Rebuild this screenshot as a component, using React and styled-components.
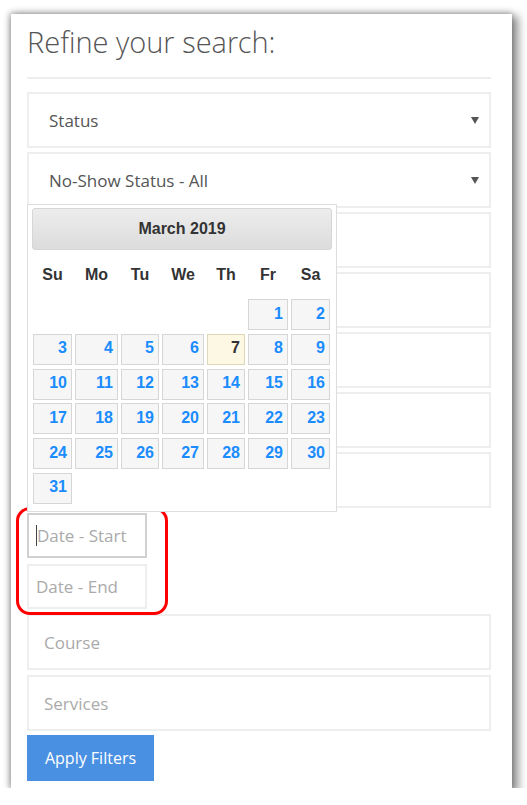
import React from "react"
import styled, { createGlobalStyle } from "styled-components"

const GlobalStyle = createGlobalStyle`
  body {
    margin: 0;
    background: #fff;
    font-family: "Open Sans", "Liberation Sans", sans-serif;
  }
`

const weeks = [
  [null, null, null, null, null, 1, 2],
  [3, 4, 5, 6, 7, 8, 9],
  [10, 11, 12, 13, 14, 15, 16],
  [17, 18, 19, 20, 21, 22, 23],
  [24, 25, 26, 27, 28, 29, 30],
  [31, null, null, null, null, null, null],
]

const dayNames = ["Su", "Mo", "Tu", "We", "Th", "Fr", "Sa"]

export default function App() {
  return (
    <Page>
      <GlobalStyle />
      <Panel>
        <Title>Refine your search:</Title>
        <Divider />
        <Field $mb={4}>
          <span>Status</span>
          <Arrow />
        </Field>
        <Field $mb={4}>
          <span>No-Show Status - All</span>
          <Arrow />
        </Field>
        <Field $mb={4} />
        <Field $mb={4} />
        <Field $mb={4} />
        <Field $mb={4} />
        <Field $mb={5} />
        <DateGroup>
          <DateInput $focused>
            <Caret />
            Date - Start
          </DateInput>
          <DateInput>Date - End</DateInput>
        </DateGroup>
        <Field $placeholder $mb={5}>
          Course
        </Field>
        <Field $placeholder $mb={4}>
          Services
        </Field>
        <ApplyButton>Apply Filters</ApplyButton>

        <Calendar>
          <CalendarHeader>March 2019</CalendarHeader>
          <DayGrid $head>
            {dayNames.map((d) => (
              <DayName key={d}>{d}</DayName>
            ))}
          </DayGrid>
          <DayGrid>
            {weeks.flat().map((day, i) =>
              day ? (
                <DayCell key={i} $today={day === 7}>
                  {day}
                </DayCell>
              ) : (
                <span key={i} />
              )
            )}
          </DayGrid>
        </Calendar>
      </Panel>
    </Page>
  )
}

const Page = styled.div`
  padding: 14px 0 0 11px;
`

const Panel = styled.div`
  position: relative;
  box-sizing: border-box;
  width: 501px;
  height: 774px;
  padding: 8px 21px 0 16px;
  background: #fff;
  box-shadow: 4px 4px 9px 2px rgba(0, 0, 0, 0.45),
    -1px -1px 6px rgba(0, 0, 0, 0.3);
`

const Title = styled.h2`
  margin: 0;
  font-family: "Open Sans Light", "Open Sans", sans-serif;
  font-weight: 300;
  font-size: 29px;
  line-height: 40px;
  color: #555;
`

const Divider = styled.div`
  margin: 15px 0 13px;
  border-top: 2px solid #eee;
`

const Field = styled.div`
  box-sizing: border-box;
  display: flex;
  align-items: center;
  justify-content: space-between;
  height: 56px;
  margin-bottom: ${(p) => p.$mb}px;
  padding: 0 10px 0 ${(p) => (p.$placeholder ? 15 : 20)}px;
  border: 2px solid #eee;
  font-size: 17px;
  color: ${(p) => (p.$placeholder ? "#aaa" : "#555")};
`

const Arrow = styled.span`
  width: 0;
  height: 0;
  border-left: 4px solid transparent;
  border-right: 4px solid transparent;
  border-top: 7px solid #555;
`

const DateGroup = styled.div`
  position: relative;
  display: flex;
  flex-direction: column;
  gap: 6px;
  margin-bottom: 5px;

  &::after {
    content: "";
    position: absolute;
    top: -6px;
    bottom: -6px;
    left: -11px;
    width: 146px;
    border: 3px solid #f00;
    border-radius: 14px;
  }
`

const DateInput = styled.div`
  box-sizing: border-box;
  display: flex;
  align-items: center;
  width: 120px;
  height: 45px;
  padding-left: 7px;
  border: 2px solid ${(p) => (p.$focused ? "#d0d0d0" : "#eee")};
  font-size: 17px;
  color: #aaa;
  white-space: nowrap;
`

const Caret = styled.span`
  width: 0;
  height: 21px;
  border-left: 1px solid #444;
`

const ApplyButton = styled.button`
  display: block;
  width: 127px;
  height: 46px;
  padding: 0;
  border: none;
  background: #4a90e2;
  color: #fff;
  font-family: "Open Sans", sans-serif;
  font-size: 16px;
`

const Calendar = styled.div`
  position: absolute;
  left: 16px;
  top: 190px;
  box-sizing: border-box;
  width: 310px;
  padding: 3px 4px 7px;
  border: 1px solid #ddd;
  background: #fff;
  font-family: "Liberation Sans", Arial, sans-serif;
`

const CalendarHeader = styled.div`
  box-sizing: border-box;
  height: 42px;
  display: flex;
  align-items: center;
  justify-content: center;
  border: 1px solid #d6d6d6;
  border-radius: 3px;
  background: linear-gradient(#ededed, #dcdcdc);
  font-weight: bold;
  font-size: 16px;
  color: #333;
`

const DayGrid = styled.div`
  display: grid;
  grid-template-columns: 39px 43px 38px 42px 38px 40px 39px;
  column-gap: 3px;
  row-gap: 3.75px;
  margin-left: 1px;
  height: ${(p) => (p.$head ? "49px" : "auto")};
  align-items: center;
`

const DayName = styled.span`
  text-align: center;
  font-weight: bold;
  font-size: 16px;
  color: #333;
`

const DayCell = styled.span`
  box-sizing: border-box;
  display: flex;
  align-items: center;
  justify-content: flex-end;
  height: 31px;
  padding: 0 4px 2px 0;
  border: 1px solid ${(p) => (p.$today ? "#dcd7b8" : "#d6d6d6")};
  background: ${(p) => (p.$today ? "#fcf8e3" : "#f6f6f6")};
  font-weight: bold;
  font-size: 16px;
  color: ${(p) => (p.$today ? "#333" : "#1a8cff")};
`
